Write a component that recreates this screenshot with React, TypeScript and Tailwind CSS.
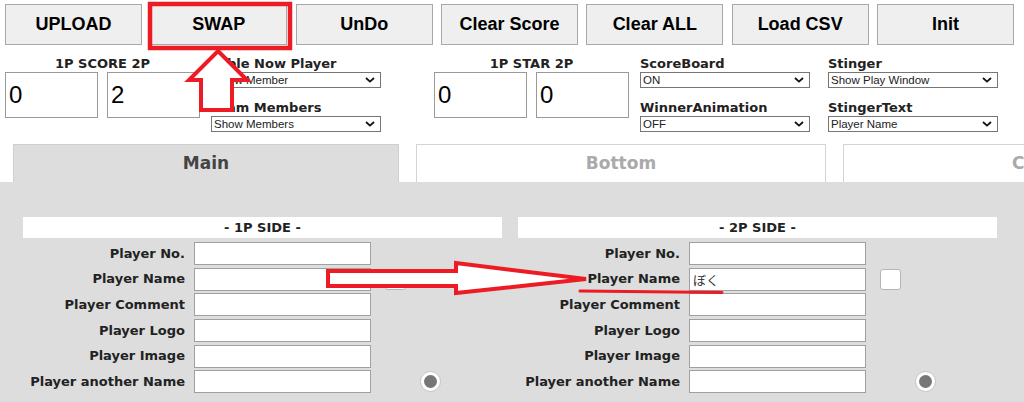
import React from "react";

const BUTTONS = ["UPLOAD", "SWAP", "UnDo", "Clear Score", "Clear ALL", "Load CSV", "Init"];
const ROWS = [
  "Player No.",
  "Player Name",
  "Player Comment",
  "Player Logo",
  "Player Image",
  "Player another Name",
];

const LABEL = "font-['DejaVu_Sans',Verdana,sans-serif] text-[13px] font-bold leading-4 text-[#222]";

function Select({ value }: { value: string }) {
  return (
    <div className="relative h-[16px] w-[170px]">
      <select
        defaultValue={value}
        className="block h-[16px] w-full appearance-none rounded-none border border-[#767676] bg-white py-0 pl-[2px] font-['Liberation_Sans',Arial,sans-serif] text-[11.5px] leading-[14px] text-[#222] outline-none"
      >
        <option>{value}</option>
      </select>
      <svg
        viewBox="0 0 10 6"
        className="pointer-events-none absolute right-[6px] top-[5px] h-[6px] w-[10px]"
        aria-hidden
      >
        <path d="M1 1l4 3.6L9 1" fill="none" stroke="#111" strokeWidth="1.8" />
      </svg>
    </div>
  );
}

function SelectField({ label, value }: { label: string; value: string }) {
  return (
    <div>
      <p className={LABEL}>{label}</p>
      <Select value={value} />
    </div>
  );
}

function PairField({ label, a, b }: { label: string; a: string; b: string }) {
  return (
    <div className="w-[195px]">
      <p className={`${LABEL} text-center`}>{label}</p>
      <div className="flex gap-[9px]">
        {[a, b].map((v, i) => (
          <input
            key={i}
            defaultValue={v}
            className="block h-[46px] w-[93px] border border-[#9a9a9a] bg-white px-[3px] font-['Liberation_Sans',Arial,sans-serif] text-[24px] text-black outline-none"
          />
        ))}
      </div>
    </div>
  );
}

function Side({ title, name }: { title: string; name?: string }) {
  return (
    <div className="w-[479px]">
      <div className={`${LABEL} flex h-[21px] items-center justify-center bg-white`}>{title}</div>
      <div className="mt-[4px] flex flex-col gap-[2.7px]">
        {ROWS.map((r, i) => (
          <div key={r} className="flex h-[23px] items-center">
            <span className={`${LABEL} w-[162px] text-right`}>{r}</span>
            <input
              defaultValue={i === 1 ? name : ""}
              className="ml-[9px] h-[23px] w-[177px] border border-[#a0a0a0] bg-white px-[3px] font-['Noto_Sans_CJK_JP',sans-serif] text-[13px] text-[#333] outline-none"
            />
            {i === 1 ? (
              <span className="ml-[14px] h-[21px] w-[21px] rounded-[3px] border border-[#b5b5b5] bg-white" />
            ) : null}
            {i === 5 ? (
              <span className="ml-[49px] flex h-[21px] w-[21px] items-center justify-center rounded-full border border-[#c4c4c4] bg-white">
                <span className="h-[13px] w-[13px] rounded-full bg-[#777]" />
              </span>
            ) : null}
          </div>
        ))}
      </div>
    </div>
  );
}

export default function App() {
  return (
    <div className="relative h-[402px] w-[1024px] overflow-hidden bg-white">
      <div className="flex gap-[8.33px] pl-[5px] pt-[4px]">
        {BUTTONS.map((b) => (
          <button
            key={b}
            className="h-[41px] w-[137px] shrink-0 border border-[#a8a8a8] bg-[#efefef] font-['Liberation_Sans',Arial,sans-serif] text-[18px] font-bold text-black"
          >
            {b}
          </button>
        ))}
      </div>

      <div className="mt-[11px] flex pl-[5px]">
        <PairField label="1P SCORE 2P" a="0" b="2" />
        <div className="ml-[11px] flex flex-col gap-[12px]">
          <SelectField label="Table Now Player" value="Show Member" />
          <SelectField label="Team Members" value="Show Members" />
        </div>
        <div className="ml-[53px]">
          <PairField label="1P STAR 2P" a="0" b="0" />
        </div>
        <div className="ml-[11px] flex flex-col gap-[12px]">
          <SelectField label="ScoreBoard" value="ON" />
          <SelectField label="WinnerAnimation" value="OFF" />
        </div>
        <div className="ml-[18px] flex flex-col gap-[12px]">
          <SelectField label="Stinger" value="Show Play Window" />
          <SelectField label="StingerText" value="Player Name" />
        </div>
      </div>

      <div className="mt-[12px] flex h-[38px] gap-[17px] pl-[13px] font-['DejaVu_Sans',Verdana,sans-serif] text-[17px] font-bold">
        <div className="flex w-[386px] shrink-0 items-center justify-center border border-b-0 border-[#cfcfcf] bg-[#dddddd] text-[#444]">
          Main
        </div>
        <div className="flex w-[410px] shrink-0 items-center justify-center border border-b-0 border-[#d4d4d4] bg-white text-[#aaa]">
          Bottom
        </div>
        <div className="flex w-[410px] shrink-0 items-center justify-center border border-b-0 border-[#d4d4d4] bg-white text-[#aaa]">
          Custom
        </div>
      </div>

      <div className="flex h-[230px] gap-[16px] bg-[#dddddd] pl-[23px] pt-[35px]">
        <Side title="- 1P SIDE -" />
        <Side title="- 2P SIDE -" name="ぼく" />
      </div>

      <svg
        className="pointer-events-none absolute left-0 top-0"
        width="1024"
        height="402"
        viewBox="0 0 1024 402"
        aria-hidden
      >
        <rect x="150" y="4" width="140" height="44" fill="none" stroke="#ed1c24" strokeWidth="4.5" />
        <polygon
          points="218,51 247,80 232,80 232,110 201,110 201,80 189,80"
          fill="#fff"
          stroke="#ed1c24"
          strokeWidth="4"
        />
        <polygon
          points="328,271 456,271 456,263 586,279 456,293 456,286 328,286"
          fill="#fff"
          stroke="#ed1c24"
          strokeWidth="4"
        />
        <path d="M580 291 L722 292.5" stroke="#ed1c24" strokeWidth="3" strokeLinecap="round" />
      </svg>
    </div>
  );
}
